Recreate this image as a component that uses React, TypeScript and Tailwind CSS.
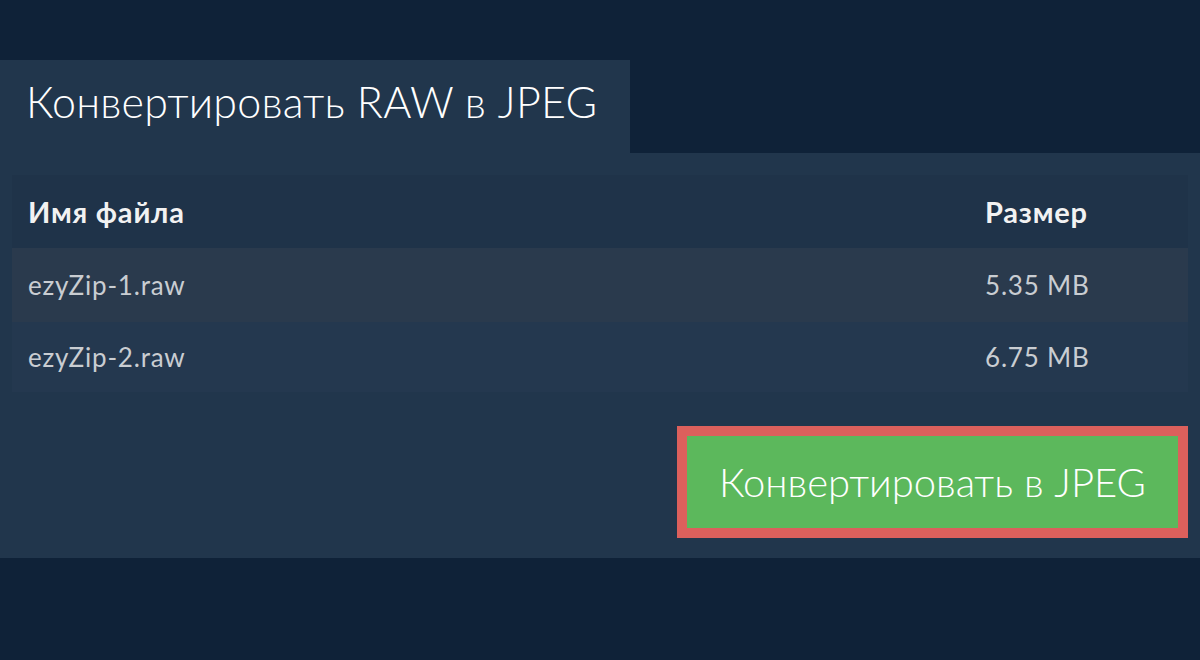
const files = [
  { name: "ezyZip-1.raw", size: "5.35 MB" },
  { name: "ezyZip-2.raw", size: "6.75 MB" },
];

export default function App() {
  return (
    <div
      className="h-[660px] w-[1200px] bg-[#0f2238] pt-[60px]"
      style={{ fontFamily: "Lato, 'Noto Sans', 'Open Sans', sans-serif" }}
    >
      <div className="flex h-[93px] w-[630px] items-center bg-[#21364c] pb-[8px] pl-[26px] text-[43px] font-light tracking-[0.2px] text-white">
        Конвертировать RAW в JPEG
      </div>
      <div className="h-[405px] bg-[#21364c] px-3 pt-[22px]">
        <div className="w-full">
          <div className="flex h-[73px] items-center bg-[#1f3349] px-4 text-[29px] font-bold tracking-[0.8px] text-[#f2f2f2]">
            <div className="flex-1">Имя файла</div>
            <div className="w-[187px]">Размер</div>
          </div>
          {files.map((f, i) => (
            <div
              key={f.name}
              className={`flex items-center px-4 text-[26px] tracking-[0.8px] text-[#c9cdd2] ${
                i === 0 ? "h-[74px] bg-[#2a3a4d]" : "h-[70px] bg-[#24384f]"
              }`}
            >
              <div className="flex-1">{f.name}</div>
              <div className="w-[187px]">{f.size}</div>
            </div>
          ))}
        </div>
        <div className="mt-[34px] flex justify-end">
          <button className="flex h-[112px] w-[511px] items-center justify-center border-[10px] border-[#dc605c] bg-[#5cb85c] text-[40px] font-light text-white">
            Конвертировать в JPEG
          </button>
        </div>
      </div>
    </div>
  );
}
